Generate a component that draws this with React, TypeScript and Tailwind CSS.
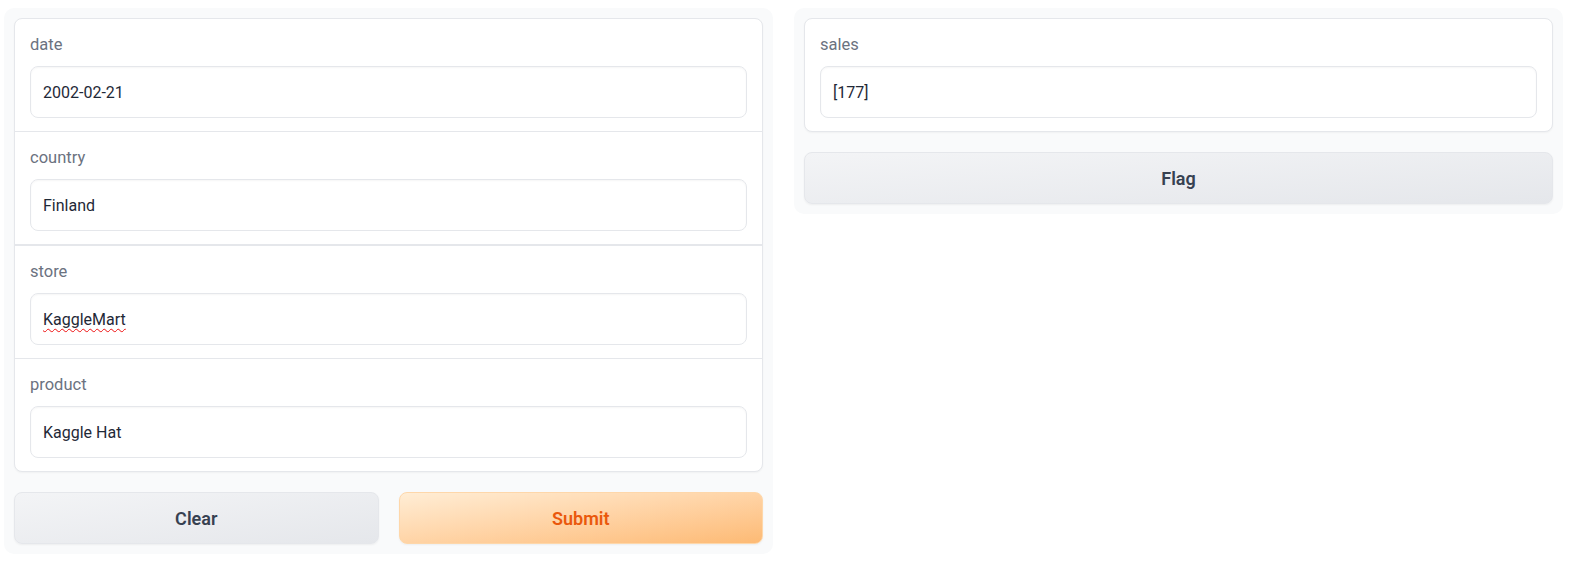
import React from 'react';

interface Field {
  label: string;
  value: string;
  misspelled?: boolean;
}

const inputs: Field[] = [
  { label: 'date', value: '2002-02-21' },
  { label: 'country', value: 'Finland' },
  { label: 'store', value: 'KaggleMart', misspelled: true },
  { label: 'product', value: 'Kaggle Hat' },
];

const FieldBlock: React.FC<{ field: Field; className?: string }> = ({ field, className }) => (
  <div className={`px-[15px] pt-[15px] pb-[13px] ${className ?? ''}`}>
    <div className="h-[21px] pt-px leading-5 text-[16.5px] text-[#6b7280]">{field.label}</div>
    <div className="mt-[11px] h-[52px] flex items-center px-3 pt-px rounded-lg border border-[#e5e7eb] bg-white shadow-[inset_0_1px_2px_rgba(0,0,0,0.04)] text-[16px] text-[#1f2937]">
      {field.misspelled ? (
        <span className="underline decoration-wavy decoration-[#ee1111] decoration-1 underline-offset-[3px] [text-decoration-skip-ink:none]">
          {field.value}
        </span>
      ) : (
        field.value
      )}
    </div>
  </div>
);

const SecondaryButton: React.FC<{ label: string }> = ({ label }) => (
  <button className="flex-1 h-[52px] rounded-lg border border-[#e5e7eb] bg-linear-to-br from-[#f3f4f6] to-[#e5e7eb] text-[18px] font-semibold text-[#374151] shadow-[0_1px_2px_rgba(0,0,0,0.05)]">
    {label}
  </button>
);

export default function App() {
  return (
    <div className="flex gap-[21px] pl-1 pr-2 pt-2 bg-white font-['Roboto',sans-serif]">
      {/* inputs column */}
      <div className="flex-1 flex flex-col gap-5 p-2.5 rounded-[10px] bg-[#f9fafb]">
        <div className="bg-white border border-[#e5e7eb] rounded-lg overflow-hidden shadow-[0_1px_2px_rgba(0,0,0,0.04)]">
          <FieldBlock field={inputs[0]} />
          <FieldBlock field={inputs[1]} className="border-t border-[#e5e7eb]" />
          <FieldBlock field={inputs[2]} className="border-t-2 border-[#e5e7eb]" />
          <FieldBlock field={inputs[3]} className="border-t border-[#e5e7eb]" />
        </div>
        <div className="flex gap-5">
          <SecondaryButton label="Clear" />
          <button className="flex-1 h-[52px] rounded-lg border border-[#fed7aa] bg-linear-to-br from-[#ffedd5] to-[#fdba74] text-[18px] font-semibold text-[#ea580c] shadow-[0_1px_2px_rgba(0,0,0,0.05)]">
            Submit
          </button>
        </div>
      </div>

      {/* outputs column */}
      <div className="flex-1 self-start flex flex-col gap-5 p-2.5 rounded-[10px] bg-[#f9fafb]">
        <div className="bg-white border border-[#e5e7eb] rounded-lg shadow-[0_1px_2px_rgba(0,0,0,0.04)]">
          <FieldBlock field={{ label: 'sales', value: '[177]' }} />
        </div>
        <div className="flex">
          <SecondaryButton label="Flag" />
        </div>
      </div>
    </div>
  );
}
